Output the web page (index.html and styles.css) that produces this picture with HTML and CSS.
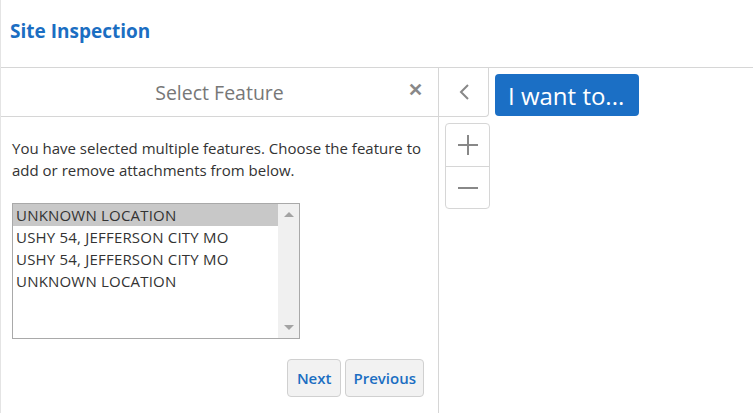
FILE: index.html
```html
<html>

<head>
    <meta charset="utf-8">
    <link rel="stylesheet" href="styles.css">
</head>

<body>
    <div class="app">
        <div class="header">
            <h1>Site Inspection</h1>
        </div>

        <div class="main">
            <div class="panel">
                <div class="panel-head">
                    <span class="panel-title">Select Feature</span>
                    <button class="close-btn" title="Close">&#x2715;</button>
                </div>

                <div class="panel-body">
                    <p class="hint">You have selected multiple features. Choose the feature to add or remove attachments from below.</p>

                    <div class="feature-list">
                        <div class="feature-items">
                            <div class="feature-item selected">UNKNOWN LOCATION</div>
                            <div class="feature-item">USHY 54, JEFFERSON CITY MO</div>
                            <div class="feature-item">USHY 54, JEFFERSON CITY MO</div>
                            <div class="feature-item">UNKNOWN LOCATION</div>
                        </div>
                        <div class="scrollbar">
                            <span class="arrow up"></span>
                            <span class="arrow down"></span>
                        </div>
                    </div>

                    <div class="actions">
                        <button class="nav-btn next">Next</button>
                        <button class="nav-btn prev">Previous</button>
                    </div>
                </div>
            </div>

            <div class="map">
                <div class="map-top">
                    <button class="back-btn">
                        <svg width="14" height="18" viewBox="0 0 14 18">
                            <path d="M11 2 L4 9 L11 16" fill="none" stroke="#888" stroke-width="2"/>
                        </svg>
                    </button>
                    <button class="want-btn">I want to...</button>
                </div>

                <div class="zoom-ctl">
                    <button class="zoom-btn">
                        <svg width="22" height="22" viewBox="0 0 22 22">
                            <path d="M11 1 V21 M1 11 H21" stroke="#888" stroke-width="2"/>
                        </svg>
                    </button>
                    <button class="zoom-btn">
                        <svg width="22" height="22" viewBox="0 0 22 22">
                            <path d="M1 11 H21" stroke="#888" stroke-width="2"/>
                        </svg>
                    </button>
                </div>
            </div>
        </div>
    </div>
</body>

</html>
```

FILE: styles.css
```css
body {
    margin: 0;
    font-family: "Open Sans", "Noto Sans", sans-serif;
    font-size: 15px;
    color: #333;
    background: #fff;
}

.app {
    width: 753px;
    height: 413px;
    border-left: 1px solid #e4e4e4;
    box-sizing: border-box;
    display: flex;
    flex-direction: column;
    overflow: hidden;
}

.header {
    height: 68px;
    border-bottom: 1px solid #d6d6d6;
    box-sizing: border-box;
    display: flex;
    align-items: center;
    padding-left: 9px;
}

.header h1 {
    margin: 0 0 6px 0;
    font-size: 19px;
    font-weight: 700;
    color: #1b6ec2;
}

.main {
    flex: 1;
    display: flex;
}

.panel {
    width: 437px;
    border-right: 1px solid #d6d6d6;
    display: flex;
    flex-direction: column;
}

.panel-head {
    position: relative;
    height: 49px;
    border-bottom: 1px solid #d6d6d6;
    box-sizing: border-box;
    display: flex;
    align-items: center;
    justify-content: center;
}

.panel-title {
    font-size: 19.5px;
    color: #777;
}

.close-btn {
    position: absolute;
    right: 15px;
    top: 11px;
    border: none;
    background: none;
    font-size: 18px;
    font-weight: 700;
    color: #888;
    padding: 0;
    cursor: pointer;
}

.panel-body {
    padding: 20px 14px 0 11px;
}

.hint {
    margin: 0 0 22px 0;
    line-height: 22px;
}

.feature-list {
    width: 288px;
    height: 136px;
    border: 1px solid #a9a9a9;
    box-sizing: border-box;
    display: flex;
}

.feature-items {
    flex: 1;
}

.feature-item {
    height: 22px;
    line-height: 22px;
    padding-left: 3px;
    white-space: nowrap;
    letter-spacing: 0.2px;
}

.feature-item.selected {
    background: #c8c8c8;
}

.scrollbar {
    width: 21px;
    background: #f0f0f0;
    display: flex;
    flex-direction: column;
    justify-content: space-between;
    align-items: center;
    padding: 8px 0;
}

.arrow {
    width: 0;
    height: 0;
    border-left: 5px solid transparent;
    border-right: 5px solid transparent;
}

.arrow.up {
    border-bottom: 5px solid #a3a3a3;
}

.arrow.down {
    border-top: 5px solid #a3a3a3;
}

.actions {
    display: flex;
    justify-content: flex-end;
    gap: 4px;
    margin-top: 20px;
}

.nav-btn {
    height: 38px;
    background: #f2f2f2;
    border: 1px solid #d0d0d0;
    border-radius: 4px;
    font-family: inherit;
    font-size: 15px;
    font-weight: 600;
    color: #1b6ec2;
    cursor: pointer;
}

.nav-btn.next {
    padding: 0 9px;
}

.nav-btn.prev {
    padding: 0 7px;
}

.map {
    flex: 1;
    display: flex;
    flex-direction: column;
}

.map-top {
    display: flex;
    align-items: flex-start;
}

.back-btn {
    width: 50px;
    height: 49px;
    background: #fff;
    border: none;
    border-right: 1px solid #d6d6d6;
    border-bottom: 1px solid #d6d6d6;
    border-bottom-right-radius: 4px;
    display: flex;
    align-items: center;
    justify-content: center;
    padding: 0;
    cursor: pointer;
}

.want-btn {
    margin: 6px 0 0 6px;
    height: 42px;
    padding: 0 15px 0 13px;
    background: #1b6fc5;
    border: none;
    border-radius: 4px;
    color: #fff;
    font-family: inherit;
    font-size: 24px;
    cursor: pointer;
}

.zoom-ctl {
    margin: 6px 0 0 6px;
    width: 45px;
    border: 1px solid #d6d6d6;
    border-radius: 4px;
    box-sizing: border-box;
    display: flex;
    flex-direction: column;
    background: #fff;
}

.zoom-btn {
    height: 42px;
    background: none;
    border: none;
    display: flex;
    align-items: center;
    justify-content: center;
    padding: 0;
    cursor: pointer;
}

.zoom-btn + .zoom-btn {
    border-top: 1px solid #d6d6d6;
}
```
